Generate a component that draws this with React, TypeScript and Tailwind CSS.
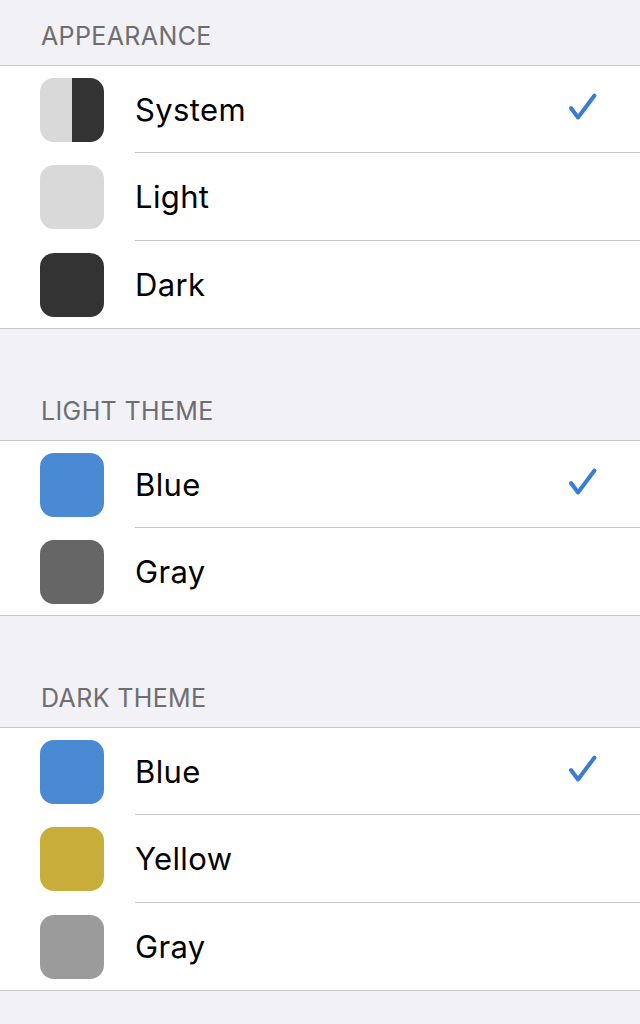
import React from "react";

type Option = {
  label: string;
  swatch: React.ReactNode;
  checked?: boolean;
};

const Swatch = ({ color }: { color: string }) => (
  <div className="w-16 h-16 rounded-[14px]" style={{ backgroundColor: color }} />
);

const SystemSwatch = () => (
  <div className="w-16 h-16 rounded-[14px] overflow-hidden flex">
    <div className="w-8 h-full bg-[#d9d9d9]" />
    <div className="w-8 h-full bg-[#333333]" />
  </div>
);

const Check = () => (
  <svg width="34" height="34" viewBox="0 0 34 34" fill="none">
    <path
      d="M5 16 L12 25.5 L28.5 3.5"
      stroke="#3a7bd5"
      strokeWidth="4"
      strokeLinecap="round"
      strokeLinejoin="round"
    />
  </svg>
);

const sections: { title: string; options: Option[] }[] = [
  {
    title: "APPEARANCE",
    options: [
      { label: "System", swatch: <SystemSwatch />, checked: true },
      { label: "Light", swatch: <Swatch color="#d9d9d9" /> },
      { label: "Dark", swatch: <Swatch color="#333333" /> },
    ],
  },
  {
    title: "LIGHT THEME",
    options: [
      { label: "Blue", swatch: <Swatch color="#4a89d3" />, checked: true },
      { label: "Gray", swatch: <Swatch color="#666666" /> },
    ],
  },
  {
    title: "DARK THEME",
    options: [
      { label: "Blue", swatch: <Swatch color="#4a89d3" />, checked: true },
      { label: "Yellow", swatch: <Swatch color="#c8ad3a" /> },
      { label: "Gray", swatch: <Swatch color="#9b9b9b" /> },
    ],
  },
];

export default function App() {
  return (
    <main
      className="min-h-screen bg-[#f2f1f6] pb-10"
      style={{ fontFamily: "Inter, 'Noto Sans', sans-serif" }}
    >
      {sections.map((section, si) => (
        <section key={section.title} className={si > 0 ? "mt-[46px]" : ""}>
          <div className="h-[65px] flex items-end pl-[41px] pb-[16px]">
            <h2 className="text-[25px] leading-none text-[#6d6d72] tracking-[0.015em]">
              {section.title}
            </h2>
          </div>
          <div className="bg-white border-y border-[#c8c7cc]">
            {section.options.map((opt, i) => {
              const last = i === section.options.length - 1;
              const middle = i > 0 && !last;
              return (
                <div
                  key={opt.label}
                  className={"flex items-stretch " + (middle ? "h-[88px]" : "h-[87px]")}
                >
                  <div className="pl-10 pr-[31px] flex items-center">{opt.swatch}</div>
                  <div
                    className={
                      "flex-1 flex items-center justify-between pr-[40px] " +
                      (last ? "" : "border-b border-[#c8c7cc]")
                    }
                  >
                    <span className="pt-[2px] text-[31px] text-black tracking-[0.012em]">
                      {opt.label}
                    </span>
                    {opt.checked && <Check />}
                  </div>
                </div>
              );
            })}
          </div>
        </section>
      ))}
    </main>
  );
}
